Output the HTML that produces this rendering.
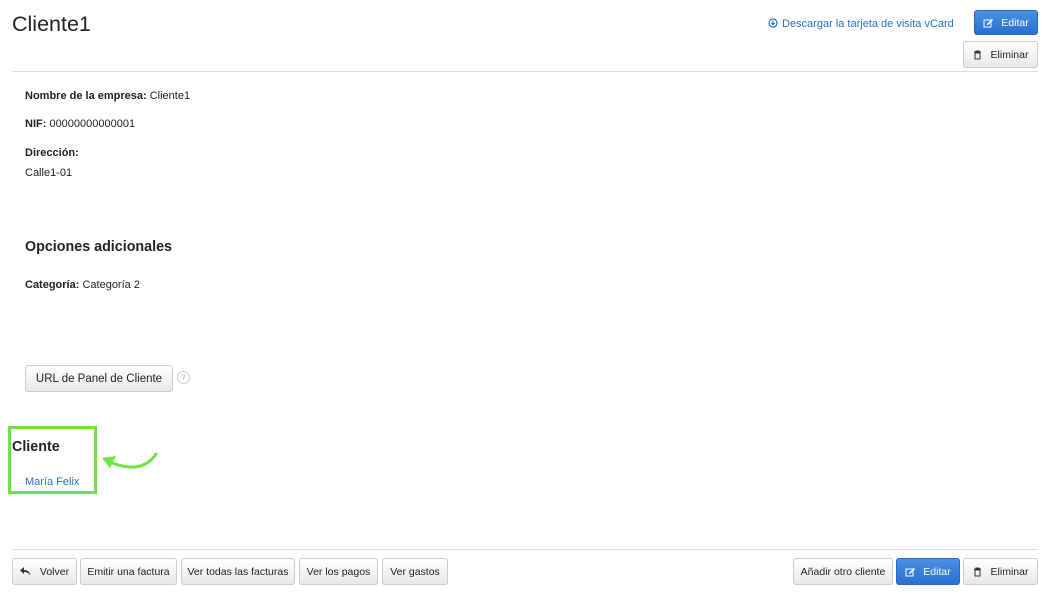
<!DOCTYPE html>
<html><head><meta charset="utf-8"><style>
*{box-sizing:border-box;margin:0;padding:0}
body{width:1049px;height:594px;background:#fff;font-family:"Liberation Sans",sans-serif;color:#222;position:relative;overflow:hidden;font-size:11px}
.a{position:absolute}
.btn{position:absolute;height:26px;border:1px solid #ccc;border-radius:3px;background:linear-gradient(#fff,#e8e8e8);font-size:10.5px;color:#222;display:flex;align-items:center;justify-content:center;white-space:nowrap}
.blue{background:linear-gradient(#4a90e2,#2a6fd0);border-color:#2a66c0;color:#fff}
b{font-weight:bold}
</style></head><body>
<div class="a" style="left:12px;top:12px;font-size:21.5px;color:#222">Cliente1</div>
<div class="a" style="left:768px;top:18px;font-size:11px;color:#2a6fc9">
<svg width="10" height="10" viewBox="0 0 10 10" style="vertical-align:-1px;margin-right:4px"><circle cx="5" cy="5" r="4" fill="none" stroke="#2a6fc9" stroke-width="1.2"/><path d="M5 2.5v4M3.3 5l1.7 1.7L6.7 5" fill="none" stroke="#2a6fc9" stroke-width="1.1"/></svg>Descargar la tarjeta de visita vCard</div>
<div class="btn blue" style="left:974px;top:10px;width:64px;height:25px">
<svg width="11" height="10" viewBox="0 0 11 10" style="margin-right:7px"><rect x="1" y="2" width="7" height="7" fill="none" stroke="#fff"/><path d="M4 6l5-5 1 1-5 5H4z" fill="#fff"/></svg>Editar</div>
<div class="btn" style="left:963px;top:41px;width:75px;height:27px">
<svg width="9" height="10" viewBox="0 0 9 10" style="margin-right:9px"><path d="M1 2h7M3 2V1h3v1M2 3h5v6H2z" fill="none" stroke="#333"/></svg>Eliminar</div>
<div class="a" style="left:12px;top:71px;width:1026px;height:1px;background:#ddd"></div>
<div class="a" style="left:25px;top:90px"><b>Nombre de la empresa:</b> Cliente1</div>
<div class="a" style="left:25px;top:118px"><b>NIF:</b> 00000000000001</div>
<div class="a" style="left:25px;top:147px"><b>Dirección:</b></div>
<div class="a" style="left:25px;top:167px">Calle1-01</div>
<div class="a" style="left:25px;top:239px;font-size:14.3px;font-weight:bold">Opciones adicionales</div>
<div class="a" style="left:25px;top:279px"><b>Categoría:</b> Categoría 2</div>
<div class="btn" style="left:25px;top:365px;width:148px;height:27px;font-size:11.5px">URL de Panel de Cliente</div>
<div class="a" style="left:177px;top:371px;width:13px;height:13px;border:1px solid #ccc;border-radius:50%;font-size:8px;color:#aaa;text-align:center;line-height:11px">?</div>
<div class="a" style="left:8px;top:426px;width:89px;height:68px;border:3px solid #6ee545"></div>
<div class="a" style="left:12px;top:439px;font-size:14.3px;font-weight:bold">Cliente</div>
<div class="a" style="left:25px;top:476px;color:#2a6fc9">María Felix</div>
<svg class="a" style="left:98px;top:450px" width="62" height="28" viewBox="0 0 62 28"><path d="M58 4C50 16 36 22 12 12" fill="none" stroke="#6ee545" stroke-width="3" stroke-linecap="round"/><path d="M4 8l14 -2 -6 12z" fill="#6ee545"/></svg>
<div class="a" style="left:12px;top:549px;width:1026px;height:1px;background:#ddd"></div>
<div class="btn" style="left:12px;top:558px;width:65px;height:27px">
<svg width="11" height="9" viewBox="0 0 11 9" style="margin-right:9px"><path d="M4 0L0 3.5 4 7V5c3 0 5 1 6 4 0-4-2-6-6-6z" fill="#333"/></svg>Volver</div>
<div class="btn" style="left:80px;top:558px;width:97px;height:27px">Emitir una factura</div>
<div class="btn" style="left:181px;top:558px;width:114px;height:27px">Ver todas las facturas</div>
<div class="btn" style="left:299px;top:558px;width:79px;height:27px">Ver los pagos</div>
<div class="btn" style="left:382px;top:558px;width:66px;height:27px">Ver gastos</div>
<div class="btn" style="left:793px;top:558px;width:100px;height:27px">Añadir otro cliente</div>
<div class="btn blue" style="left:896px;top:558px;width:64px;height:27px">
<svg width="11" height="10" viewBox="0 0 11 10" style="margin-right:7px"><rect x="1" y="2" width="7" height="7" fill="none" stroke="#fff"/><path d="M4 6l5-5 1 1-5 5H4z" fill="#fff"/></svg>Editar</div>
<div class="btn" style="left:963px;top:558px;width:75px;height:27px">
<svg width="9" height="10" viewBox="0 0 9 10" style="margin-right:9px"><path d="M1 2h7M3 2V1h3v1M2 3h5v6H2z" fill="none" stroke="#333"/></svg>Eliminar</div>
</body></html>
